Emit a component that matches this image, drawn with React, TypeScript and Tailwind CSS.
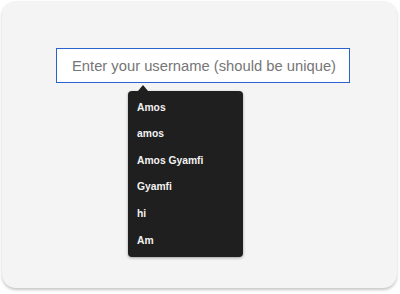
import React from "react";

const suggestions = ["Amos", "amos", "Amos Gyamfi", "Gyamfi", "hi", "Am"];

export default function App() {
  return (
    <div className="h-[294px] w-[400px] bg-white px-[2px] pt-[1px] font-['Liberation_Sans',Arial,sans-serif]">
      <div className="h-[287px] w-[395px] rounded-[14px] bg-[#f4f4f4] pt-[47px] pl-[54px] shadow-[0_2px_3px_rgba(0,0,0,0.22)]">
        <div className="relative w-[294px]">
          <input
            type="text"
            placeholder="Enter your username (should be unique)"
            className="h-[35px] w-full border-[1.5px] border-[#2a62d2] bg-white pl-[15px] font-['Liberation_Sans',Arial,sans-serif] text-[14.75px] text-[#333] placeholder:text-[#767676] outline-none"
          />
          <div className="absolute left-[72px] top-[43px] w-[115px] rounded-[4px] bg-[#1f1f1f] py-[3px] shadow-[0_1px_3px_rgba(0,0,0,0.35)]">
            <div className="absolute -top-[6px] left-[10px] h-0 w-0 border-x-[5px] border-b-[6px] border-x-transparent border-b-[#1f1f1f]" />
            {suggestions.map((s) => (
              <div key={s} className="flex h-[26.6px] items-center pl-[9px] text-[10.3px] font-bold text-[#f2f2f2]">
                {s}
              </div>
            ))}
          </div>
        </div>
      </div>
    </div>
  );
}
